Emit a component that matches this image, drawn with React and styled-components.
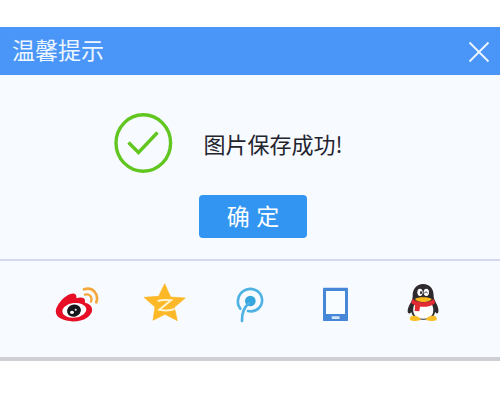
import React from "react";
import styled, { createGlobalStyle } from "styled-components";

const GlobalStyle = createGlobalStyle`
  *, *::before, *::after { box-sizing: border-box; }
  body {
    margin: 0;
    background: #fff;
    font-family: "Liberation Sans", "Noto Sans CJK SC", sans-serif;
  }
`;

const Page = styled.main`
  padding-top: 27px;
`;

const Dialog = styled.section`
  background: #f7fbff;
  border-bottom: 4px solid #cfced4;
`;

const Header = styled.header`
  display: flex;
  align-items: center;
  justify-content: space-between;
  height: 48px;
  padding: 0 8px 0 12px;
  background: #4a96f8;
  color: #eef6ff;
`;

const Title = styled.h1`
  margin: 0;
  font-size: 23px;
  line-height: 32px;
  font-weight: 400;
`;

const CloseButton = styled.button`
  display: flex;
  padding: 0;
  border: 0;
  background: none;
  color: inherit;
  cursor: pointer;
`;

const Body = styled.div`
  display: flex;
  flex-direction: column;
  align-items: center;
  gap: 22px;
  padding: 38px 32px 21px 38px;
`;

const Message = styled.div`
  display: flex;
  align-items: center;
  gap: 29px;
  padding-right: 49px;
`;

const MessageText = styled.p`
  margin: 0;
  color: #24242f;
  font-family: "Noto Sans CJK SC", sans-serif;
  font-size: 22px;
  line-height: 32px;
  font-weight: 400;
`;

const ConfirmButton = styled.button`
  height: 43px;
  padding: 0 28px;
  border: 0;
  border-radius: 4px;
  background: #3295f2;
  color: #fff;
  font-family: inherit;
  font-size: 23px;
  line-height: 32px;
  cursor: pointer;
`;

const ShareBar = styled.nav`
  display: grid;
  grid-template-columns: repeat(5, 1fr);
  padding: 21px 34px 31px;
  border-top: 2px solid #d3d8f0;
`;

const ShareLink = styled.a`
  display: flex;
  justify-content: center;
`;

const Icon = styled.svg`
  display: block;
  width: ${(p) => p.$size}px;
  height: ${(p) => p.$size}px;
  fill: none;
`;

const CloseIcon = () => (
  <Icon $size={26} viewBox="0 0 26 26" aria-hidden="true">
    <path d="M3.5 4.5 22.5 23.5M22.5 4.5 3.5 23.5" stroke="currentColor" strokeWidth="1.8" />
  </Icon>
);

const SuccessIcon = () => (
  <Icon $size={60} viewBox="0 0 60 60" aria-hidden="true">
    <ellipse cx="29.3" cy="30" rx="27.3" ry="28.2" stroke="#62c621" strokeWidth="3.4" />
    <path d="M14.5 29.5 24.5 39.5 43.5 19.5" stroke="#62c621" strokeWidth="3.4" />
  </Icon>
);

const WeiboIcon = () => (
  <Icon $size={44} viewBox="30 21 132 132" aria-hidden="true">
    <path
      d="M76 57C91 51 96 61 94 70C105 65 121 66 120 78C119 82 119 83 123 84C150 93 144 116 126 128C104 143 66 142 46 130C31 121 29 108 37 94C45 78 61 62 76 57Z"
      fill="#e60f26"
    />
    <ellipse cx="88" cy="106" rx="36" ry="22" fill="#fff" transform="rotate(-7 88 106)" />
    <ellipse cx="87" cy="107" rx="21" ry="18" fill="#17181b" transform="rotate(-15 87 107)" />
    <ellipse cx="81" cy="112" rx="6" ry="5" fill="#fff" />
    <circle cx="92" cy="104" r="3" fill="#fff" />
    <path d="M117 43C142 35 163 56 154 82" stroke="#f4a73b" strokeWidth="8" strokeLinecap="round" />
    <path d="M120 59C134 55 143 66 138 80" stroke="#f4a73b" strokeWidth="7" strokeLinecap="round" />
  </Icon>
);

const QzoneIcon = () => (
  <Icon $size={44} viewBox="21 21 132 132" aria-hidden="true">
    <path
      d="M89 26 107 66 151 69 118 97 127 137 90 118 54 136 60 96 27 67 71 64Z"
      fill="#fcb827"
      stroke="#fcb827"
      strokeWidth="2"
      strokeLinejoin="round"
    />
    <path d="M68 78C82 74 96 75 108 76L73 104C87 107 102 108 119 102" stroke="#fff3cf" strokeWidth="6" />
  </Icon>
);

const MicroblogIcon = () => (
  <Icon $size={44} viewBox="24 21 132 132" aria-hidden="true">
    <circle cx="91" cy="78" r="16" fill="#35a6de" />
    <path
      d="M61 101C48 85 53 58 72 47C92 35 119 45 125 66C132 92 110 114 84 108"
      stroke="#4fb2e2"
      strokeWidth="8"
      strokeLinecap="round"
    />
    <path d="M87 84C72 97 65 115 66 138" stroke="#4fb2e2" strokeWidth="8" strokeLinecap="round" />
  </Icon>
);

const PhoneIcon = () => (
  <Icon $size={44} viewBox="27 21 132 132" aria-hidden="true">
    <rect x="54" y="38" width="75" height="100" rx="2" fill="#4787d8" />
    <rect x="63" y="48" width="57" height="69" fill="#fafdff" />
    <rect x="80" y="124" width="24" height="8" rx="2" fill="#d2e5fa" />
  </Icon>
);

const QQIcon = () => (
  <Icon $size={44} viewBox="27 21 132 132" aria-hidden="true">
    <path
      d="M93 27C114 27 126 42 125 64C125 70 128 75 131 82C139 95 142 110 137 115C134 117 130 112 129 111C127 123 119 134 94 134C70 134 61 123 58 111C55 116 50 117 48 113C45 105 50 92 58 80C60 75 62 71 62 64C61 42 74 27 93 27Z"
      fill="#2d292d"
    />
    <path d="M68 86C82 94 105 94 119 86C131 111 121 131 94 131C66 131 57 109 68 86Z" fill="#fff" />
    <path d="M59 123C69 121 85 127 86 133C86 139 61 140 55 135C52 131 53 127 59 123Z" fill="#f9bd25" />
    <path d="M129 123C119 121 103 127 102 133C102 139 127 140 133 135C136 131 135 127 129 123Z" fill="#f9bd25" />
    <path d="M62 72C78 85 109 85 125 72L130 83C119 94 100 97 84 95L82 109 68 108 69 91 57 84Z" fill="#e22b32" />
    <ellipse cx="84" cy="52" rx="8" ry="11" fill="#fff" />
    <ellipse cx="103" cy="52" rx="8" ry="11" fill="#fff" />
    <ellipse cx="87" cy="53" rx="3" ry="5" fill="#2d292d" />
    <path d="M98 55C99 49 105 49 106 55" stroke="#2d292d" strokeWidth="3" />
    <path d="M69 72C75 65 112 65 119 72C113 84 75 84 69 72Z" fill="#fcb91d" />
  </Icon>
);

const SHARE_TARGETS = [
  { label: "新浪微博", Glyph: WeiboIcon },
  { label: "QQ空间", Glyph: QzoneIcon },
  { label: "腾讯微博", Glyph: MicroblogIcon },
  { label: "手机", Glyph: PhoneIcon },
  { label: "QQ", Glyph: QQIcon },
];

export default function App() {
  return (
    <Page>
      <GlobalStyle />
      <Dialog role="dialog" aria-labelledby="dialog-title">
        <Header>
          <Title id="dialog-title">温馨提示</Title>
          <CloseButton type="button" aria-label="关闭">
            <CloseIcon />
          </CloseButton>
        </Header>
        <Body>
          <Message>
            <SuccessIcon />
            <MessageText>图片保存成功!</MessageText>
          </Message>
          <ConfirmButton type="button">确 定</ConfirmButton>
        </Body>
        <ShareBar aria-label="分享">
          {SHARE_TARGETS.map(({ label, Glyph }) => (
            <ShareLink key={label} href="#" aria-label={label}>
              <Glyph />
            </ShareLink>
          ))}
        </ShareBar>
      </Dialog>
    </Page>
  );
}
